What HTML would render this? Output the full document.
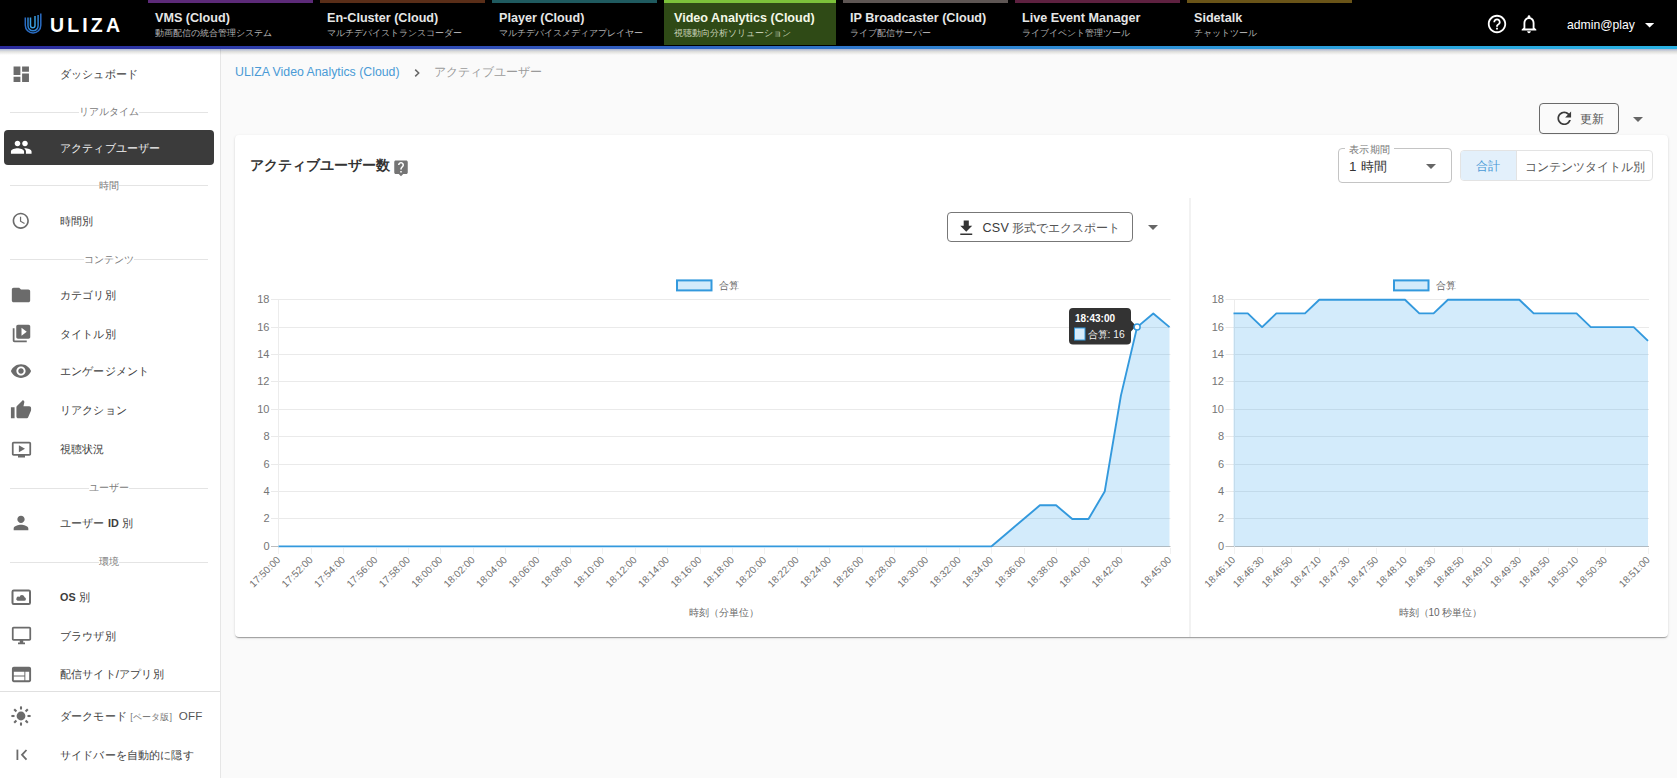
<!DOCTYPE html>
<html lang="ja"><head><meta charset="utf-8"><title>ULIZA Video Analytics</title>
<style>
*{box-sizing:border-box}
html,body{margin:0;padding:0}
body{width:1677px;height:778px;overflow:hidden;position:relative;background:#fafafa;font-family:"Liberation Sans",sans-serif;color:#333}
.a{position:absolute;white-space:nowrap}
.ic{position:absolute;display:block}
#hdr{position:absolute;left:0;top:0;width:1677px;height:46px;background:#000}
#hline{position:absolute;left:0;top:46px;width:1677px;height:3px;background:linear-gradient(90deg,#2a2a9c 0%,#2f4fb8 30%,#2f7fd0 55%,#2aa6df 85%,#2ab2e4 100%)}
#hshadow{position:absolute;left:0;top:49px;width:1677px;height:6px;background:linear-gradient(180deg,rgba(40,70,150,.38),rgba(80,80,60,.16) 45%,rgba(0,0,0,0))}
.tab{position:absolute;top:0;height:45px}
.tab .bar{position:absolute;left:0;top:0;right:0;height:3px}
.tab .t{position:absolute;left:7px;top:10.5px;font-size:12.6px;font-weight:bold;color:#e6e6e6;letter-spacing:0}
.tab .s{position:absolute;left:7px;top:27px;font-size:9.2px;color:#b4b4b4}
#side{position:absolute;left:0;top:49px;width:221px;height:729px;background:#fff;border-right:1px solid #e6e6e6}
.si{position:absolute;left:60px;font-size:11.4px;letter-spacing:.15px;color:#3d3d3d}
.dv{position:absolute;left:10px;width:198px;height:1px;background:#e4e4e4}
.dvt{position:absolute;font-size:10px;color:#7a7a7a;background:#fff;padding:0}
</style></head><body>

<div id="hdr"></div><div id="hline"></div>
<svg class="ic" style="left:18px;top:8px;width:30px;height:30px" viewBox="18 8 30 30">
<g fill="none">
<path d="M25.3 17.5 V25.3 A7.75 7.75 0 0 0 40.8 25.3 V13.4" stroke="#2a6cc4" stroke-width="1.5"/>
<path d="M28 17.5 V25.8 A5.05 5.05 0 0 0 38.1 25.8 V15" stroke="#2f82d2" stroke-width="1.5"/>
<path d="M30.5 17.5 V25.45 A2.25 2.25 0 0 0 35 25.45 V16.1" stroke="#3a9fe0" stroke-width="1.5"/>
</g></svg>
<div class="a" style="left:50px;top:14px;font-size:19.5px;font-weight:bold;color:#fff;letter-spacing:3.15px;line-height:22px">ULIZA</div>
<div class="tab" style="left:148px;width:165px;"><div class="bar" style="background:#5c2a78"></div><div class="t a" style="left:7px">VMS (Cloud)</div><div class="s a" style="left:7px">動画配信の統合管理システム</div></div>
<div class="tab" style="left:320px;width:165px;"><div class="bar" style="background:#5a2e18"></div><div class="t a" style="left:7px">En-Cluster (Cloud)</div><div class="s a" style="left:7px">マルチデバイストランスコーダー</div></div>
<div class="tab" style="left:492px;width:165px;"><div class="bar" style="background:#1f5a5f"></div><div class="t a" style="left:7px">Player (Cloud)</div><div class="s a" style="left:7px">マルチデバイスメディアプレイヤー</div></div>
<div class="tab" style="left:664px;width:172px;background:#2f4a16;"><div class="bar" style="background:#7cc23a"></div><div class="t a" style="left:10px;color:#f4f8e8">Video Analytics (Cloud)</div><div class="s a" style="left:10px;color:#c8d2b8">視聴動向分析ソリューション</div></div>
<div class="tab" style="left:843px;width:165px;"><div class="bar" style="background:#5e5654"></div><div class="t a" style="left:7px">IP Broadcaster (Cloud)</div><div class="s a" style="left:7px">ライブ配信サーバー</div></div>
<div class="tab" style="left:1015px;width:165px;"><div class="bar" style="background:#5e2140"></div><div class="t a" style="left:7px">Live Event Manager</div><div class="s a" style="left:7px">ライブイベント管理ツール</div></div>
<div class="tab" style="left:1187px;width:165px;"><div class="bar" style="background:#6a5418"></div><div class="t a" style="left:7px">Sidetalk</div><div class="s a" style="left:7px">チャットツール</div></div>
<svg class="ic" style="left:1486px;top:13px;width:22px;height:22px" viewBox="0 0 24 24"><path fill="#fff" d="M11 18h2v-2h-2v2zm1-16C6.48 2 2 6.48 2 12s4.48 10 10 10 10-4.48 10-10S17.52 2 12 2zm0 18c-4.41 0-8-3.59-8-8s3.59-8 8-8 8 3.59 8 8-3.59 8-8 8zm0-14c-2.21 0-4 1.79-4 4h2c0-1.1.9-2 2-2s2 .9 2 2c0 2-3 1.75-3 5h2c0-2.25 3-2.5 3-5 0-2.21-1.79-4-4-4z"/></svg>
<svg class="ic" style="left:1518px;top:13px;width:22px;height:22px" viewBox="0 0 24 24"><path fill="#fff" d="M12 22c1.1 0 2-.9 2-2h-4c0 1.1.89 2 2 2zm6-6v-5c0-3.07-1.64-5.64-4.5-6.32V4c0-.83-.67-1.5-1.5-1.5s-1.5.67-1.5 1.5v.68C7.63 5.36 6 7.92 6 11v5l-2 2v1h16v-1l-2-2zm-2 1H8v-6c0-2.48 1.51-4.5 4-4.5s4 2.02 4 4.5v6z"/></svg>
<div class="a" style="left:1567px;top:18px;font-size:12.2px;color:#fff">admin@play</div>
<svg class="ic" style="left:1645.3px;top:23px;width:9.2px;height:4.6px" viewBox="0 0 10 5"><path d="M0 0h10L5 5z" fill="#fff"/></svg>
<div id="side"></div>
<div class="a" style="left:4px;top:130px;width:210px;height:35px;background:#3b3b3b;border-radius:4px"></div>
<svg class="ic" style="left:10.75px;top:63.650000000000006px;width:20.5px;height:20.5px" viewBox="0 0 24 24"><path fill="#6b6b6b" d="M3 13h8V3H3v10zm0 8h8v-6H3v6zm10 0h8V11h-8v10zm0-18v6h8V3h-8z"/></svg>
<div class="si a" style="top:65.9px;color:#3d3d3d;line-height:16px">ダッシュボード</div>
<svg class="ic" style="left:9.75px;top:136.25px;width:22.5px;height:22.5px" viewBox="0 0 24 24"><path fill="#fff" d="M16 11c1.66 0 2.99-1.34 2.99-3S17.66 5 16 5c-1.66 0-3 1.34-3 3s1.34 3 3 3zm-8 0c1.66 0 2.99-1.34 2.99-3S9.66 5 8 5C6.34 5 5 6.34 5 8s1.34 3 3 3zm0 2c-2.33 0-7 1.17-7 3.5V19h14v-2.5c0-2.33-4.67-3.5-7-3.5zm8 0c-.29 0-.62.02-.97.05 1.16.84 1.97 1.97 1.97 3.45V19h6v-2.5c0-2.33-4.67-3.5-7-3.5z"/></svg>
<div class="si a" style="top:139.5px;color:#f4f4f4;line-height:16px">アクティブユーザー</div>
<svg class="ic" style="left:11.25px;top:211.45px;width:19.5px;height:19.5px" viewBox="0 0 24 24"><path fill="#6b6b6b" d="M11.99 2C6.47 2 2 6.48 2 12s4.47 10 9.99 10C17.52 22 22 17.52 22 12S17.52 2 11.99 2zM12 20c-4.42 0-8-3.58-8-8s3.58-8 8-8 8 3.58 8 8-3.58 8-8 8zm.5-13H11v6l5.25 3.15.75-1.23-4.5-2.67z"/></svg>
<div class="si a" style="top:213.2px;color:#3d3d3d;line-height:16px">時間別</div>
<svg class="ic" style="left:10.0px;top:283.6px;width:22px;height:22px" viewBox="0 0 24 24"><path fill="#6b6b6b" d="M10 4H4c-1.1 0-1.99.9-1.99 2L2 18c0 1.1.9 2 2 2h16c1.1 0 2-.9 2-2V8c0-1.1-.9-2-2-2h-8l-2-2z"/></svg>
<div class="si a" style="top:286.6px;color:#3d3d3d;line-height:16px">カテゴリ別</div>
<svg class="ic" style="left:10.5px;top:323.3px;width:21px;height:21px" viewBox="0 0 24 24"><path fill="#6b6b6b" d="M4 6H2v14c0 1.1.9 2 2 2h14v-2H4V6zm16-4H8c-1.1 0-2 .9-2 2v12c0 1.1.9 2 2 2h12c1.1 0 2-.9 2-2V4c0-1.1-.9-2-2-2zm-8 12.5v-9l6 4.5-6 4.5z"/></svg>
<div class="si a" style="top:325.8px;color:#3d3d3d;line-height:16px">タイトル別</div>
<svg class="ic" style="left:10.0px;top:360.3px;width:22px;height:22px" viewBox="0 0 24 24"><path fill="#6b6b6b" d="M12 4.5C7 4.5 2.730 7.610 1 12c1.73 4.39 6 7.5 11 7.5s9.27-3.11 11-7.5c-1.73-4.39-6-7.5-11-7.5zM12 17c-2.76 0-5-2.24-5-5s2.24-5 5-5 5 2.24 5 5-2.240 5-5 5zm0-8c-1.66 0-3 1.34-3 3s1.34 3 3 3 3-1.34 3-3-1.34-3-3-3z"/></svg>
<div class="si a" style="top:363.3px;color:#3d3d3d;line-height:16px">エンゲージメント</div>
<svg class="ic" style="left:10.0px;top:399.0px;width:22px;height:22px" viewBox="0 0 24 24"><path fill="#6b6b6b" d="M1 21h4V9H1v12zm22-11c0-1.1-.9-2-2-2h-6.31l.95-4.57.03-.32c0-.41-.17-.79-.44-1.06L14.17 1 7.59 7.59C7.22 7.95 7 8.45 7 9v10c0 1.1.9 2 2 2h9c.83 0 1.54-.5 1.84-1.22l3.02-7.05c.09-.23.14-.47.14-.73v-1.91l-.01-.01L23 10z"/></svg>
<div class="si a" style="top:402.0px;color:#3d3d3d;line-height:16px">リアクション</div>
<svg class="ic" style="left:10.5px;top:438.5px;width:21px;height:21px" viewBox="0 0 24 24"><path fill="#6b6b6b" d="M21 3H3c-1.11 0-2 .89-2 2v12c0 1.1.89 2 2 2h5v2h8v-2h5c1.1 0 1.99-.9 1.99-2L23 5c0-1.11-.9-2-2-2zm0 14H3V5h18v12zM16 11l-7 4V7z"/></svg>
<div class="si a" style="top:441.0px;color:#3d3d3d;line-height:16px">視聴状況</div>
<svg class="ic" style="left:10.0px;top:511.79999999999995px;width:22px;height:22px" viewBox="0 0 24 24"><path fill="#6b6b6b" d="M12 12c2.21 0 4-1.79 4-4s-1.79-4-4-4-4 1.79-4 4 1.79 4 4 4zm0 2c-2.67 0-8 1.34-8 4v2h16v-2c0-2.66-5.33-4-8-4z"/></svg>
<div class="si a" style="top:514.8px;color:#3d3d3d;line-height:16px">ユーザー <b style="font-size:10.8px">ID</b> 別</div>
<svg class="ic" style="left:11px;top:588.7px;width:21px;height:17px" viewBox="0 0 21 17"><rect x="1.5" y="1.5" width="17.5" height="13.5" rx="1.2" fill="none" stroke="#6b6b6b" stroke-width="2"/><path d="M6.5 11.8H13.2A1.75 1.75 0 0 0 13.6 8.35A2.7 2.7 0 0 0 8.4 7.9A1.95 1.95 0 0 0 6.5 11.8Z" fill="#6b6b6b"/></svg>
<div class="si a" style="top:589.2px;color:#3d3d3d;line-height:16px"><b style="font-size:10.8px">OS</b> 別</div>
<svg class="ic" style="left:10.5px;top:625.2px;width:21px;height:21px" viewBox="0 0 24 24"><path fill="#6b6b6b" d="M21 2H3c-1.1 0-2 .9-2 2v12c0 1.1.9 2 2 2h7v2H8v2h8v-2h-2v-2h7c1.1 0 2-.9 2-2V4c0-1.1-.9-2-2-2zm0 14H3V4h18v12z"/></svg>
<div class="si a" style="top:627.7px;color:#3d3d3d;line-height:16px">ブラウザ別</div>
<svg class="ic" style="left:9.5px;top:662.5px;width:23px;height:23px" viewBox="0 0 24 24"><path fill="#6b6b6b" d="M20 4H4c-1.1 0-1.99.9-1.99 2L2 18c0 1.1.9 2 2 2h16c1.1 0 2-.9 2-2V6c0-1.1-.9-2-2-2zm-5 14H4v-4h11v4zm0-5H4V9h11v4zm5 5h-4V9h4v9z"/></svg>
<div class="si a" style="top:666.0px;color:#3d3d3d;line-height:16px">配信サイト/アプリ別</div>
<svg class="ic" style="left:11px;top:705.8px;width:20px;height:20px" viewBox="0 0 20 20"><circle cx="10" cy="10" r="4.4" fill="#6b6b6b"/><line x1="10.00" y1="3.50" x2="10.00" y2="0.40" stroke="#6b6b6b" stroke-width="2.1"/><line x1="14.60" y1="5.40" x2="16.79" y2="3.21" stroke="#6b6b6b" stroke-width="2.1"/><line x1="16.50" y1="10.00" x2="19.60" y2="10.00" stroke="#6b6b6b" stroke-width="2.1"/><line x1="14.60" y1="14.60" x2="16.79" y2="16.79" stroke="#6b6b6b" stroke-width="2.1"/><line x1="10.00" y1="16.50" x2="10.00" y2="19.60" stroke="#6b6b6b" stroke-width="2.1"/><line x1="5.40" y1="14.60" x2="3.21" y2="16.79" stroke="#6b6b6b" stroke-width="2.1"/><line x1="3.50" y1="10.00" x2="0.40" y2="10.00" stroke="#6b6b6b" stroke-width="2.1"/><line x1="5.40" y1="5.40" x2="3.21" y2="3.21" stroke="#6b6b6b" stroke-width="2.1"/></svg>
<div class="si a" style="top:707.8px;color:#3d3d3d;line-height:16px">ダークモード <span style="font-size:9px;color:#777">[ベータ版]</span>&nbsp; <span style="color:#555;font-size:11.6px">OFF</span></div>
<svg class="ic" style="left:14.5px;top:747.0px;width:14px;height:16px" viewBox="0 0 14 16"><path d="M2.4 2.6V13" stroke="#6b6b6b" stroke-width="1.8" fill="none"/><path d="M11.5 3 7 7.8 11.5 12.6" stroke="#6b6b6b" stroke-width="1.8" fill="none"/></svg>
<div class="si a" style="top:747.0px;color:#3d3d3d;line-height:16px">サイドバーを自動的に隠す</div>
<div class="dv" style="top:111.8px"></div>
<div class="dvt a" style="left:109px;transform:translateX(-50%);top:105.3px;line-height:14px">リアルタイム</div>
<div class="dv" style="top:185.2px"></div>
<div class="dvt a" style="left:109px;transform:translateX(-50%);top:178.7px;line-height:14px">時間</div>
<div class="dv" style="top:259.2px"></div>
<div class="dvt a" style="left:109px;transform:translateX(-50%);top:252.7px;line-height:14px">コンテンツ</div>
<div class="dv" style="top:487.5px"></div>
<div class="dvt a" style="left:109px;transform:translateX(-50%);top:481px;line-height:14px">ユーザー</div>
<div class="dv" style="top:561.5px"></div>
<div class="dvt a" style="left:109px;transform:translateX(-50%);top:555px;line-height:14px">環境</div>
<div class="a" style="left:0;top:690.5px;width:220px;height:1px;background:#e0e0e0"></div>
<div class="a" style="left:235px;top:64px;font-size:12.3px;color:#4a9ad6;line-height:16px">ULIZA Video Analytics (Cloud)</div>
<svg class="ic" style="left:411.6px;top:67.5px;width:10px;height:10px" viewBox="0 0 10 10"><path d="M3.2 1.6 6.7 5 3.2 8.4" fill="none" stroke="#666" stroke-width="1.5"/></svg>
<div class="a" style="left:434px;top:64px;font-size:12.3px;color:#9a9a9a;line-height:16px">アクティブユーザー</div>
<div class="a" style="left:1539px;top:103px;width:80px;height:31px;border:1.5px solid #6a6a6a;border-radius:4px"></div>
<svg class="ic" style="left:1554px;top:108px;width:20.5px;height:20.5px" viewBox="0 0 24 24"><path fill="#3a3a3a" d="M17.65 6.35C16.2 4.9 14.21 4 12 4c-4.42 0-7.99 3.58-7.990 8s3.57 8 7.99 8c3.73 0 6.84-2.55 7.73-6h-2.08c-.82 2.33-3.04 4-5.65 4-3.31 0-6-2.690-6-6s2.69-6 6-6c1.66 0 3.14.69 4.22 1.78L13 11h7V4l-2.35 2.35z"/></svg>
<div class="a" style="left:1580px;top:110.5px;font-size:12px;color:#555;line-height:16px">更新</div>
<svg class="ic" style="left:1633px;top:117px;width:10px;height:5px" viewBox="0 0 10 5"><path d="M0 0h10L5 5z" fill="#666"/></svg>
<div class="a" style="left:235px;top:135px;width:1433px;height:502px;background:#fff;border-radius:4px;box-shadow:0 2px 1px -1px rgba(0,0,0,.2),0 1px 1px 0 rgba(0,0,0,.14),0 1px 3px 0 rgba(0,0,0,.12)"></div>
<div class="a" style="left:250px;top:157px;font-size:13.8px;font-weight:bold;color:#333;line-height:17px">アクティブユーザー数</div>
<svg class="ic" style="left:392px;top:158.5px;width:18px;height:18px" viewBox="0 0 24 24"><path fill="#757575" d="M19 2H5c-1.11 0-2 .9-2 2v14c0 1.1.89 2 2 2h4l3 3 3-3h4c1.1 0 2-.9 2-2V4c0-1.1-.9-2-2-2zm-6 16h-2v-2h2v2zm2.07-7.75l-.9.92C13.45 11.9 13 12.5 13 14h-2v-.5c0-1.1.45-2.1 1.170-2.83l1.24-1.26c.37-.36.59-.86.59-1.41 0-1.1-.9-2-2-2s-2 .9-2 2H8c0-2.21 1.79-4 4-4s4 1.79 4 4c0 .88-.36 1.68-.93 2.25z"/></svg>
<div class="a" style="left:1338px;top:148px;width:114px;height:35px;border:1px solid #c4c4c4;border-radius:4px"></div>
<div class="a" style="left:1345px;top:144px;width:49px;height:6px;background:#fff"></div>
<div class="a" style="left:1348.5px;top:142.5px;font-size:10px;letter-spacing:.5px;color:#777;line-height:14px">表示期間</div>
<div class="a" style="left:1349px;top:157.5px;font-size:13.4px;color:#333;line-height:17px;letter-spacing:.4px">1&nbsp;時間</div>
<svg class="ic" style="left:1426px;top:164px;width:10px;height:5px" viewBox="0 0 10 5"><path d="M0 0h10L5 5z" fill="#666"/></svg>
<div class="a" style="left:1460px;top:150px;width:193px;height:31px;border:1px solid #e3e3e3;border-radius:4px;overflow:hidden"><div style="position:absolute;left:0;top:0;width:56px;height:100%;background:#e3f0fb;border-right:1px solid #e3e3e3"></div></div>
<div class="a" style="left:1476px;top:158px;font-size:12.3px;color:#4a9ad6;line-height:16px">合計</div>
<div class="a" style="left:1524.5px;top:158.5px;font-size:12.25px;color:#555;line-height:16px">コンテンツタイトル別</div>
<div class="a" style="left:947px;top:212px;width:186px;height:30px;border:1px solid #777;border-radius:4px"></div>
<svg class="ic" style="left:955.5px;top:218px;width:20.5px;height:20.5px" viewBox="0 0 24 24"><path fill="#333" d="M19 9h-4V3H9v6H5l7 7 7-7zM5 18v2h14v-2H5z"/></svg>
<div class="a" style="left:982.5px;top:220px;font-size:12px;color:#555;line-height:16px"><span style="color:#3a3a3a;font-size:12.6px;letter-spacing:.2px">CSV</span> 形式でエクスポート</div>
<svg class="ic" style="left:1148px;top:225px;width:10px;height:5px" viewBox="0 0 10 5"><path d="M0 0h10L5 5z" fill="#666"/></svg>
<div class="a" style="left:1189px;top:198px;width:2px;height:439px;background:#f2f2f2"></div>
<svg class="ic" style="left:0;top:0;width:1677px;height:778px;font-family:'Liberation Sans',sans-serif" viewBox="0 0 1677 778"><line x1="271.0" y1="546.5" x2="1170.5" y2="546.5" stroke="#bdbdbd" stroke-width="1"/><text x="269.5" y="550.3" text-anchor="end" font-size="11" fill="#757575">0</text><line x1="271.0" y1="518.5" x2="1170.5" y2="518.5" stroke="#eaeaea" stroke-width="1"/><text x="269.5" y="522.3" text-anchor="end" font-size="11" fill="#757575">2</text><line x1="271.0" y1="491.5" x2="1170.5" y2="491.5" stroke="#eaeaea" stroke-width="1"/><text x="269.5" y="495.3" text-anchor="end" font-size="11" fill="#757575">4</text><line x1="271.0" y1="464.5" x2="1170.5" y2="464.5" stroke="#eaeaea" stroke-width="1"/><text x="269.5" y="468.3" text-anchor="end" font-size="11" fill="#757575">6</text><line x1="271.0" y1="436.5" x2="1170.5" y2="436.5" stroke="#eaeaea" stroke-width="1"/><text x="269.5" y="440.3" text-anchor="end" font-size="11" fill="#757575">8</text><line x1="271.0" y1="409.5" x2="1170.5" y2="409.5" stroke="#eaeaea" stroke-width="1"/><text x="269.5" y="413.3" text-anchor="end" font-size="11" fill="#757575">10</text><line x1="271.0" y1="381.5" x2="1170.5" y2="381.5" stroke="#eaeaea" stroke-width="1"/><text x="269.5" y="385.3" text-anchor="end" font-size="11" fill="#757575">12</text><line x1="271.0" y1="354.5" x2="1170.5" y2="354.5" stroke="#eaeaea" stroke-width="1"/><text x="269.5" y="358.3" text-anchor="end" font-size="11" fill="#757575">14</text><line x1="271.0" y1="327.5" x2="1170.5" y2="327.5" stroke="#eaeaea" stroke-width="1"/><text x="269.5" y="331.3" text-anchor="end" font-size="11" fill="#757575">16</text><line x1="271.0" y1="299.5" x2="1170.5" y2="299.5" stroke="#eaeaea" stroke-width="1"/><text x="269.5" y="303.3" text-anchor="end" font-size="11" fill="#757575">18</text><line x1="278.5" y1="300" x2="278.5" y2="554" stroke="#ececec"/><line x1="278.5" y1="548" x2="278.5" y2="554" stroke="#f1f1f1"/><text transform="translate(281.0,560.5) rotate(-45)" text-anchor="end" font-size="10" fill="#707070">17:50:00</text><line x1="311.5" y1="548" x2="311.5" y2="554" stroke="#f1f1f1"/><text transform="translate(313.4,560.5) rotate(-45)" text-anchor="end" font-size="10" fill="#707070">17:52:00</text><line x1="343.5" y1="548" x2="343.5" y2="554" stroke="#f1f1f1"/><text transform="translate(345.8,560.5) rotate(-45)" text-anchor="end" font-size="10" fill="#707070">17:54:00</text><line x1="376.5" y1="548" x2="376.5" y2="554" stroke="#f1f1f1"/><text transform="translate(378.2,560.5) rotate(-45)" text-anchor="end" font-size="10" fill="#707070">17:56:00</text><line x1="408.5" y1="548" x2="408.5" y2="554" stroke="#f1f1f1"/><text transform="translate(410.6,560.5) rotate(-45)" text-anchor="end" font-size="10" fill="#707070">17:58:00</text><line x1="440.5" y1="548" x2="440.5" y2="554" stroke="#f1f1f1"/><text transform="translate(443.0,560.5) rotate(-45)" text-anchor="end" font-size="10" fill="#707070">18:00:00</text><line x1="473.5" y1="548" x2="473.5" y2="554" stroke="#f1f1f1"/><text transform="translate(475.4,560.5) rotate(-45)" text-anchor="end" font-size="10" fill="#707070">18:02:00</text><line x1="505.5" y1="548" x2="505.5" y2="554" stroke="#f1f1f1"/><text transform="translate(507.79999999999995,560.5) rotate(-45)" text-anchor="end" font-size="10" fill="#707070">18:04:00</text><line x1="538.5" y1="548" x2="538.5" y2="554" stroke="#f1f1f1"/><text transform="translate(540.2,560.5) rotate(-45)" text-anchor="end" font-size="10" fill="#707070">18:06:00</text><line x1="570.5" y1="548" x2="570.5" y2="554" stroke="#f1f1f1"/><text transform="translate(572.5999999999999,560.5) rotate(-45)" text-anchor="end" font-size="10" fill="#707070">18:08:00</text><line x1="602.5" y1="548" x2="602.5" y2="554" stroke="#f1f1f1"/><text transform="translate(605.0,560.5) rotate(-45)" text-anchor="end" font-size="10" fill="#707070">18:10:00</text><line x1="635.5" y1="548" x2="635.5" y2="554" stroke="#f1f1f1"/><text transform="translate(637.4,560.5) rotate(-45)" text-anchor="end" font-size="10" fill="#707070">18:12:00</text><line x1="667.5" y1="548" x2="667.5" y2="554" stroke="#f1f1f1"/><text transform="translate(669.8,560.5) rotate(-45)" text-anchor="end" font-size="10" fill="#707070">18:14:00</text><line x1="700.5" y1="548" x2="700.5" y2="554" stroke="#f1f1f1"/><text transform="translate(702.2,560.5) rotate(-45)" text-anchor="end" font-size="10" fill="#707070">18:16:00</text><line x1="732.5" y1="548" x2="732.5" y2="554" stroke="#f1f1f1"/><text transform="translate(734.5999999999999,560.5) rotate(-45)" text-anchor="end" font-size="10" fill="#707070">18:18:00</text><line x1="764.5" y1="548" x2="764.5" y2="554" stroke="#f1f1f1"/><text transform="translate(767.0,560.5) rotate(-45)" text-anchor="end" font-size="10" fill="#707070">18:20:00</text><line x1="797.5" y1="548" x2="797.5" y2="554" stroke="#f1f1f1"/><text transform="translate(799.4,560.5) rotate(-45)" text-anchor="end" font-size="10" fill="#707070">18:22:00</text><line x1="829.5" y1="548" x2="829.5" y2="554" stroke="#f1f1f1"/><text transform="translate(831.8,560.5) rotate(-45)" text-anchor="end" font-size="10" fill="#707070">18:24:00</text><line x1="862.5" y1="548" x2="862.5" y2="554" stroke="#f1f1f1"/><text transform="translate(864.1999999999999,560.5) rotate(-45)" text-anchor="end" font-size="10" fill="#707070">18:26:00</text><line x1="894.5" y1="548" x2="894.5" y2="554" stroke="#f1f1f1"/><text transform="translate(896.6,560.5) rotate(-45)" text-anchor="end" font-size="10" fill="#707070">18:28:00</text><line x1="926.5" y1="548" x2="926.5" y2="554" stroke="#f1f1f1"/><text transform="translate(929.0,560.5) rotate(-45)" text-anchor="end" font-size="10" fill="#707070">18:30:00</text><line x1="959.5" y1="548" x2="959.5" y2="554" stroke="#f1f1f1"/><text transform="translate(961.4,560.5) rotate(-45)" text-anchor="end" font-size="10" fill="#707070">18:32:00</text><line x1="991.5" y1="548" x2="991.5" y2="554" stroke="#f1f1f1"/><text transform="translate(993.8,560.5) rotate(-45)" text-anchor="end" font-size="10" fill="#707070">18:34:00</text><line x1="1024.5" y1="548" x2="1024.5" y2="554" stroke="#f1f1f1"/><text transform="translate(1026.1999999999998,560.5) rotate(-45)" text-anchor="end" font-size="10" fill="#707070">18:36:00</text><line x1="1056.5" y1="548" x2="1056.5" y2="554" stroke="#f1f1f1"/><text transform="translate(1058.6,560.5) rotate(-45)" text-anchor="end" font-size="10" fill="#707070">18:38:00</text><line x1="1088.5" y1="548" x2="1088.5" y2="554" stroke="#f1f1f1"/><text transform="translate(1091.0,560.5) rotate(-45)" text-anchor="end" font-size="10" fill="#707070">18:40:00</text><line x1="1121.5" y1="548" x2="1121.5" y2="554" stroke="#f1f1f1"/><text transform="translate(1123.4,560.5) rotate(-45)" text-anchor="end" font-size="10" fill="#707070">18:42:00</text><line x1="1170.5" y1="548" x2="1170.5" y2="554" stroke="#f1f1f1"/><text transform="translate(1172.0,560.5) rotate(-45)" text-anchor="end" font-size="10" fill="#707070">18:45:00</text><path d="M278.50 546.40 L294.70 546.40 L310.90 546.40 L327.10 546.40 L343.30 546.40 L359.50 546.40 L375.70 546.40 L391.90 546.40 L408.10 546.40 L424.30 546.40 L440.50 546.40 L456.70 546.40 L472.90 546.40 L489.10 546.40 L505.30 546.40 L521.50 546.40 L537.70 546.40 L553.90 546.40 L570.10 546.40 L586.30 546.40 L602.50 546.40 L618.70 546.40 L634.90 546.40 L651.10 546.40 L667.30 546.40 L683.50 546.40 L699.70 546.40 L715.90 546.40 L732.10 546.40 L748.30 546.40 L764.50 546.40 L780.70 546.40 L796.90 546.40 L813.10 546.40 L829.30 546.40 L845.50 546.40 L861.70 546.40 L877.90 546.40 L894.10 546.40 L910.30 546.40 L926.50 546.40 L942.70 546.40 L958.90 546.40 L975.10 546.40 L991.30 546.40 L1007.50 532.69 L1023.70 518.99 L1039.90 505.28 L1056.10 505.28 L1072.30 518.99 L1088.50 518.99 L1104.70 491.58 L1120.90 395.64 L1137.10 327.11 L1153.30 313.41 L1169.50 327.11 L1169.50 546.4 L278.50 546.4 Z" fill="rgba(54,162,235,0.22)"/><path d="M278.50 546.40 L294.70 546.40 L310.90 546.40 L327.10 546.40 L343.30 546.40 L359.50 546.40 L375.70 546.40 L391.90 546.40 L408.10 546.40 L424.30 546.40 L440.50 546.40 L456.70 546.40 L472.90 546.40 L489.10 546.40 L505.30 546.40 L521.50 546.40 L537.70 546.40 L553.90 546.40 L570.10 546.40 L586.30 546.40 L602.50 546.40 L618.70 546.40 L634.90 546.40 L651.10 546.40 L667.30 546.40 L683.50 546.40 L699.70 546.40 L715.90 546.40 L732.10 546.40 L748.30 546.40 L764.50 546.40 L780.70 546.40 L796.90 546.40 L813.10 546.40 L829.30 546.40 L845.50 546.40 L861.70 546.40 L877.90 546.40 L894.10 546.40 L910.30 546.40 L926.50 546.40 L942.70 546.40 L958.90 546.40 L975.10 546.40 L991.30 546.40 L1007.50 532.69 L1023.70 518.99 L1039.90 505.28 L1056.10 505.28 L1072.30 518.99 L1088.50 518.99 L1104.70 491.58 L1120.90 395.64 L1137.10 327.11 L1153.30 313.41 L1169.50 327.11" fill="none" stroke="#3399dd" stroke-width="1.9" stroke-linejoin="round"/><rect x="677" y="280.4" width="34.5" height="10" fill="rgba(54,162,235,0.22)" stroke="#3399dd" stroke-width="2"/><text x="718.5" y="288.8" font-size="10" fill="#666">合算</text><text x="724" y="615.5" text-anchor="middle" font-size="10" fill="#666">時刻（分単位）</text><line x1="1225.5" y1="546.5" x2="1649" y2="546.5" stroke="#bdbdbd" stroke-width="1"/><text x="1224" y="550.3" text-anchor="end" font-size="11" fill="#757575">0</text><line x1="1225.5" y1="518.5" x2="1649" y2="518.5" stroke="#eaeaea" stroke-width="1"/><text x="1224" y="522.3" text-anchor="end" font-size="11" fill="#757575">2</text><line x1="1225.5" y1="491.5" x2="1649" y2="491.5" stroke="#eaeaea" stroke-width="1"/><text x="1224" y="495.3" text-anchor="end" font-size="11" fill="#757575">4</text><line x1="1225.5" y1="464.5" x2="1649" y2="464.5" stroke="#eaeaea" stroke-width="1"/><text x="1224" y="468.3" text-anchor="end" font-size="11" fill="#757575">6</text><line x1="1225.5" y1="436.5" x2="1649" y2="436.5" stroke="#eaeaea" stroke-width="1"/><text x="1224" y="440.3" text-anchor="end" font-size="11" fill="#757575">8</text><line x1="1225.5" y1="409.5" x2="1649" y2="409.5" stroke="#eaeaea" stroke-width="1"/><text x="1224" y="413.3" text-anchor="end" font-size="11" fill="#757575">10</text><line x1="1225.5" y1="381.5" x2="1649" y2="381.5" stroke="#eaeaea" stroke-width="1"/><text x="1224" y="385.3" text-anchor="end" font-size="11" fill="#757575">12</text><line x1="1225.5" y1="354.5" x2="1649" y2="354.5" stroke="#eaeaea" stroke-width="1"/><text x="1224" y="358.3" text-anchor="end" font-size="11" fill="#757575">14</text><line x1="1225.5" y1="327.5" x2="1649" y2="327.5" stroke="#eaeaea" stroke-width="1"/><text x="1224" y="331.3" text-anchor="end" font-size="11" fill="#757575">16</text><line x1="1225.5" y1="299.5" x2="1649" y2="299.5" stroke="#eaeaea" stroke-width="1"/><text x="1224" y="303.3" text-anchor="end" font-size="11" fill="#757575">18</text><line x1="1234.5" y1="300" x2="1234.5" y2="554" stroke="#ececec"/><line x1="1234.5" y1="548" x2="1234.5" y2="554" stroke="#f1f1f1"/><text transform="translate(1236.0,560.5) rotate(-45)" text-anchor="end" font-size="10" fill="#707070">18:46:10</text><line x1="1262.5" y1="548" x2="1262.5" y2="554" stroke="#f1f1f1"/><text transform="translate(1264.5862068965516,560.5) rotate(-45)" text-anchor="end" font-size="10" fill="#707070">18:46:30</text><line x1="1291.5" y1="548" x2="1291.5" y2="554" stroke="#f1f1f1"/><text transform="translate(1293.1724137931035,560.5) rotate(-45)" text-anchor="end" font-size="10" fill="#707070">18:46:50</text><line x1="1319.5" y1="548" x2="1319.5" y2="554" stroke="#f1f1f1"/><text transform="translate(1321.7586206896551,560.5) rotate(-45)" text-anchor="end" font-size="10" fill="#707070">18:47:10</text><line x1="1348.5" y1="548" x2="1348.5" y2="554" stroke="#f1f1f1"/><text transform="translate(1350.344827586207,560.5) rotate(-45)" text-anchor="end" font-size="10" fill="#707070">18:47:30</text><line x1="1376.5" y1="548" x2="1376.5" y2="554" stroke="#f1f1f1"/><text transform="translate(1378.9310344827586,560.5) rotate(-45)" text-anchor="end" font-size="10" fill="#707070">18:47:50</text><line x1="1405.5" y1="548" x2="1405.5" y2="554" stroke="#f1f1f1"/><text transform="translate(1407.5172413793102,560.5) rotate(-45)" text-anchor="end" font-size="10" fill="#707070">18:48:10</text><line x1="1434.5" y1="548" x2="1434.5" y2="554" stroke="#f1f1f1"/><text transform="translate(1436.103448275862,560.5) rotate(-45)" text-anchor="end" font-size="10" fill="#707070">18:48:30</text><line x1="1462.5" y1="548" x2="1462.5" y2="554" stroke="#f1f1f1"/><text transform="translate(1464.6896551724137,560.5) rotate(-45)" text-anchor="end" font-size="10" fill="#707070">18:48:50</text><line x1="1491.5" y1="548" x2="1491.5" y2="554" stroke="#f1f1f1"/><text transform="translate(1493.2758620689656,560.5) rotate(-45)" text-anchor="end" font-size="10" fill="#707070">18:49:10</text><line x1="1519.5" y1="548" x2="1519.5" y2="554" stroke="#f1f1f1"/><text transform="translate(1521.8620689655172,560.5) rotate(-45)" text-anchor="end" font-size="10" fill="#707070">18:49:30</text><line x1="1548.5" y1="548" x2="1548.5" y2="554" stroke="#f1f1f1"/><text transform="translate(1550.4482758620688,560.5) rotate(-45)" text-anchor="end" font-size="10" fill="#707070">18:49:50</text><line x1="1577.5" y1="548" x2="1577.5" y2="554" stroke="#f1f1f1"/><text transform="translate(1579.0344827586207,560.5) rotate(-45)" text-anchor="end" font-size="10" fill="#707070">18:50:10</text><line x1="1605.5" y1="548" x2="1605.5" y2="554" stroke="#f1f1f1"/><text transform="translate(1607.6206896551723,560.5) rotate(-45)" text-anchor="end" font-size="10" fill="#707070">18:50:30</text><line x1="1648.5" y1="548" x2="1648.5" y2="554" stroke="#f1f1f1"/><text transform="translate(1650.5,560.5) rotate(-45)" text-anchor="end" font-size="10" fill="#707070">18:51:00</text><path d="M1233.50 313.41 L1247.79 313.41 L1262.09 327.11 L1276.38 313.41 L1290.67 313.41 L1304.97 313.41 L1319.26 299.70 L1333.55 299.70 L1347.84 299.70 L1362.14 299.70 L1376.43 299.70 L1390.72 299.70 L1405.02 299.70 L1419.31 313.41 L1433.60 313.41 L1447.90 299.70 L1462.19 299.70 L1476.48 299.70 L1490.78 299.70 L1505.07 299.70 L1519.36 299.70 L1533.66 313.41 L1547.95 313.41 L1562.24 313.41 L1576.53 313.41 L1590.83 327.11 L1605.12 327.11 L1619.41 327.11 L1633.71 327.11 L1648.00 340.82 L1648.00 546.4 L1233.50 546.4 Z" fill="rgba(54,162,235,0.22)"/><path d="M1233.50 313.41 L1247.79 313.41 L1262.09 327.11 L1276.38 313.41 L1290.67 313.41 L1304.97 313.41 L1319.26 299.70 L1333.55 299.70 L1347.84 299.70 L1362.14 299.70 L1376.43 299.70 L1390.72 299.70 L1405.02 299.70 L1419.31 313.41 L1433.60 313.41 L1447.90 299.70 L1462.19 299.70 L1476.48 299.70 L1490.78 299.70 L1505.07 299.70 L1519.36 299.70 L1533.66 313.41 L1547.95 313.41 L1562.24 313.41 L1576.53 313.41 L1590.83 327.11 L1605.12 327.11 L1619.41 327.11 L1633.71 327.11 L1648.00 340.82" fill="none" stroke="#3399dd" stroke-width="1.9" stroke-linejoin="round"/><rect x="1394" y="280.4" width="34.5" height="10" fill="rgba(54,162,235,0.22)" stroke="#3399dd" stroke-width="2"/><text x="1435.5" y="288.8" font-size="10" fill="#666">合算</text><text x="1440.5" y="615.5" text-anchor="middle" font-size="10" fill="#666">時刻（10 秒単位）</text><path d="M1073 308h54a4 4 0 0 1 4 4v8.5l5 5.5-5 5.5v9a4 4 0 0 1-4 4h-54a4 4 0 0 1-4-4v-28.5a4 4 0 0 1 4-4z" fill="#333"/><text x="1075" y="322" font-size="10" font-weight="bold" fill="#fff">18:43:00</text><rect x="1074.5" y="328" width="10.5" height="12" fill="#d7ecfb" stroke="#3399dd" stroke-width="1"/><text x="1087.5" y="337.8" font-size="10.3" fill="#f2f2f2">合算: 16</text><circle cx="1137.10" cy="327.11" r="3" fill="#fff" stroke="#3399dd" stroke-width="1.5"/></svg>
<div id="hshadow"></div>
</body></html>
